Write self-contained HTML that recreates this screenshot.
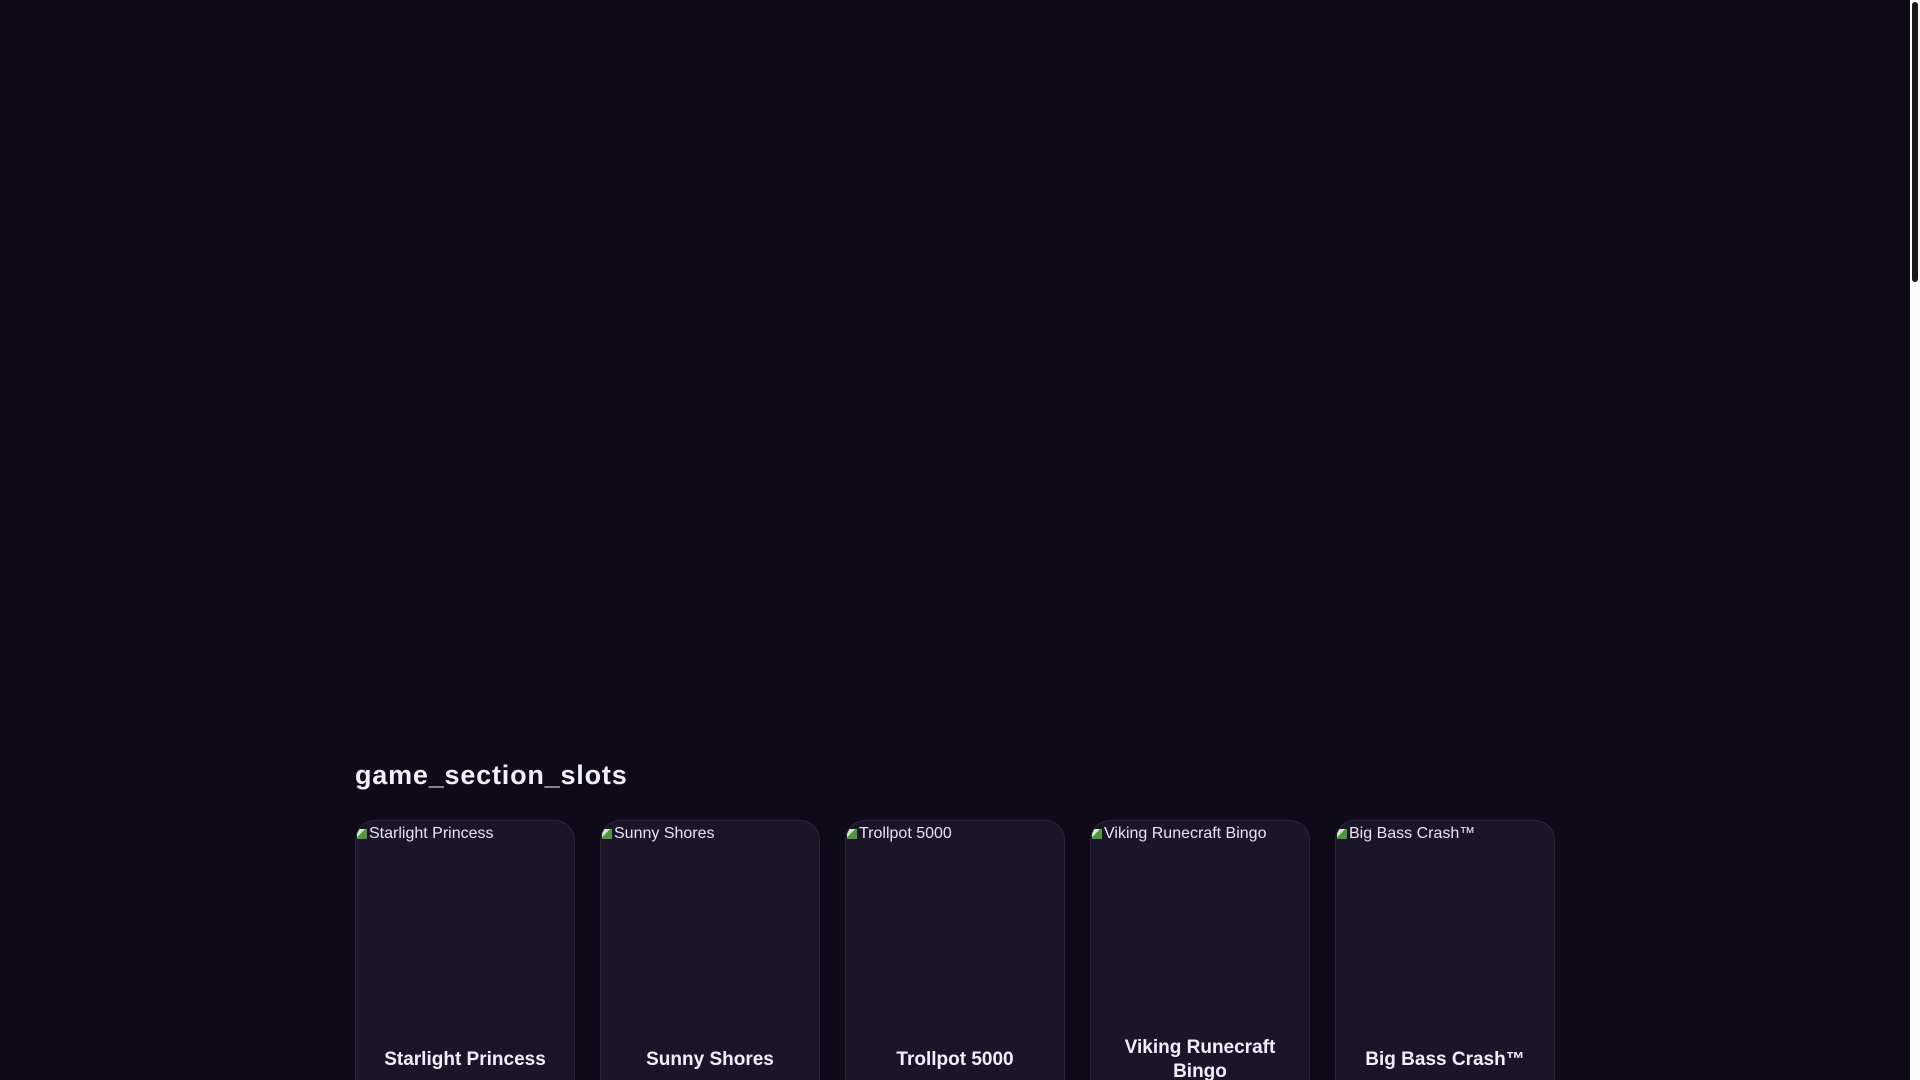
<!DOCTYPE html>
<html><head><meta charset="utf-8"><style>
html,body{margin:0;padding:0;width:1920px;height:1080px;overflow:hidden;background:#0e0a18;font-family:"Liberation Sans",sans-serif;position:relative;}
.sb{position:absolute;left:1910px;top:0;width:10px;height:1080px;background:#fafafa;}
.th{position:absolute;left:1912px;top:2px;width:6px;height:280px;background:#1a1a1a;border-radius:3px;}
h2{position:absolute;left:355px;top:760px;margin:0;color:#f2eff8;font-size:27px;font-weight:bold;letter-spacing:0.8px;}
.card{position:absolute;top:820px;width:218px;height:260px;background:#1b1528;border:1px solid #2b2539;border-bottom:none;border-radius:20px 20px 0 0;overflow:hidden;}
.alt{position:absolute;left:1px;top:4px;color:#e8e4ef;font-size:16px;white-space:nowrap;}
.alt:before{content:"";display:inline-block;width:10px;height:10px;background:linear-gradient(135deg,#ddd 40%,#4a9a3a 41%);margin-right:2px;vertical-align:-1px;border-radius:3px 0 0 0;}
.t{position:absolute;left:22px;right:22px;top:215px;height:48px;display:flex;align-items:center;justify-content:center;text-align:center;color:#f2eff8;font-size:19px;font-weight:bold;line-height:24px;}
</style></head><body>
<h2>game_section_slots</h2>
<div class="card" style="left:355px"><div class="alt">Starlight Princess</div><div class="t">Starlight Princess</div></div>
<div class="card" style="left:600px"><div class="alt">Sunny Shores</div><div class="t">Sunny Shores</div></div>
<div class="card" style="left:845px"><div class="alt">Trollpot 5000</div><div class="t">Trollpot 5000</div></div>
<div class="card" style="left:1090px"><div class="alt">Viking Runecraft Bingo</div><div class="t">Viking Runecraft Bingo</div></div>
<div class="card" style="left:1335px"><div class="alt">Big Bass Crash™</div><div class="t">Big Bass Crash™</div></div>
<div class="sb"></div><div class="th"></div>
</body></html>
